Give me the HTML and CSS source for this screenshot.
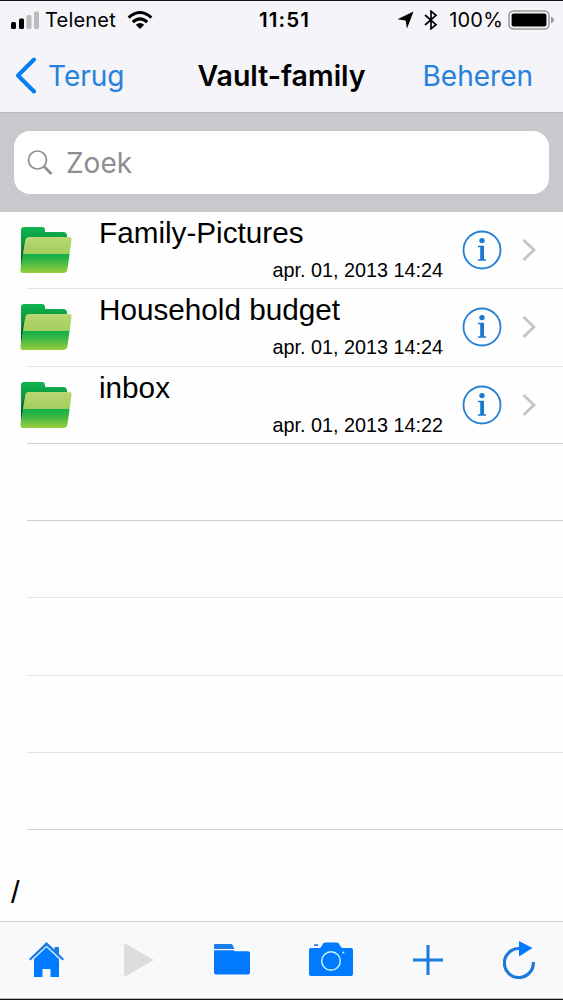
FILE: index.html
```html
<!DOCTYPE html>
<html lang="nl">
<head>
    <meta charset="UTF-8">
    <meta name="viewport" content="width=device-width, initial-scale=1.0">
    <title>Vault-family</title>
    <link rel="stylesheet" href="styles.css">
</head>
<body>
    <!-- shared shapes -->
    <svg width="0" height="0">
        <defs>
            <linearGradient id="back" x1="0" y1="0" x2="0" y2="1">
                <stop offset="0" stop-color="#12b552"/>
                <stop offset=".35" stop-color="#079a3f"/>
                <stop offset="1" stop-color="#09602a"/>
            </linearGradient>
            <linearGradient id="front" x1="0" y1="0" x2="0" y2="1">
                <stop offset="0" stop-color="#b9d774"/>
                <stop offset=".46" stop-color="#a3ce5c"/>
                <stop offset=".48" stop-color="#10b04a"/>
                <stop offset=".65" stop-color="#35b545"/>
                <stop offset="1" stop-color="#98cf3b"/>
            </linearGradient>
            <symbol id="folder" viewBox="0 0 52 48">
                <path fill="url(#back)" d="M1 4Q1 1 4 1H22Q25 1 25 4V6H43Q47 6 47 10V40H1Z"/>
                <path fill="#075c26" d="M5 14L1 30V42L6 20Z"/>
                <path fill="url(#front)" d="M9 11H49Q52 11 51.500 14L47.500 43Q47 47 43 47H3Q0 47 .5 43L5 15Q5.600 11 9 11Z"/>
            </symbol>
            <symbol id="info" viewBox="0 0 40 40">
                <circle cx="20" cy="20" r="18.500" fill="none" stroke="#2480d4" stroke-width="1.800"/>
                <circle cx="20" cy="10.600" r="2.700" fill="#1a78cf"/>
                <path fill="#1a78cf" d="M16 15.700H22V29.200H24V30.700H16V29.200H18.200V17.200H16Z"/>
            </symbol>
            <symbol id="chevron" viewBox="0 0 14 24">
                <path fill="none" stroke="#c4c4c6" stroke-width="2.800" d="M1.500 2L12 12L1.500 22"/>
            </symbol>
        </defs>
    </svg>

    <div class="phone">
        <header class="top">
            <div class="status">
                <div class="status-left">
                    <svg width="30" height="20" viewBox="0 0 30 20">
                        <rect x="1" y="12" width="5" height="7" rx="1.500"/>
                        <rect x="9" y="8.500" width="5" height="10.500" rx="1.500"/>
                        <rect x="16.500" y="5" width="5" height="14" rx="1.500" fill="#bcbcbe"/>
                        <rect x="24" y="1.500" width="5" height="17.500" rx="1.500" fill="#bcbcbe"/>
                    </svg>
                    <span class="carrier">Telenet</span>
                    <svg class="wifi" width="26" height="18" viewBox="0 0 26 18">
                        <g fill="none" stroke="#000" stroke-width="3">
                            <path d="M1.600 6.600Q13 -3.500 24.400 6.600"/>
                            <path d="M5.800 11.200Q13 4.600 20.200 11.200"/>
                        </g>
                        <path d="M8.800 13.700Q13 10.200 17.200 13.700L13 18Z"/>
                    </svg>
                </div>
                <span class="clock">11:51</span>
                <div class="status-right">
                    <svg width="17" height="18" viewBox="0 0 17 18">
                        <path d="M16.500 .5L10 17.500L8.600 9.600L.5 8.300Z"/>
                    </svg>
                    <svg class="bluetooth" width="14" height="20" viewBox="0 0 14 20">
                        <path fill="none" stroke="#000" stroke-width="1.700" d="M1 5L12 14.700L7 18.800V1.200L12 5.300L1 15"/>
                    </svg>
                    <span class="percent">100%</span>
                    <svg width="46" height="20" viewBox="0 0 46 20">
                        <rect x="1" y="1" width="40" height="18" rx="4.500" fill="none" stroke="#98989b" stroke-width="1.500"/>
                        <rect x="3.600" y="3.500" width="34.800" height="13" rx="2"/>
                        <path fill="#98989b" d="M43 6.500Q46 8 46 10T43 13.500Z"/>
                    </svg>
                </div>
            </div>
            <nav class="nav">
                <a class="back">
                    <svg width="22" height="37" viewBox="0 0 22 37">
                        <path fill="none" stroke="#067ef0" stroke-width="4" stroke-linecap="round" stroke-linejoin="round" d="M19 2.500L3 18.500L19 34.500"/>
                    </svg>
                    <span>Terug</span>
                </a>
                <h1>Vault-family</h1>
                <a class="manage">Beheren</a>
            </nav>
        </header>

        <div class="search">
            <div class="search-box">
                <svg width="26" height="26" viewBox="0 0 26 26">
                    <g fill="none" stroke="#8e8e90">
                        <circle cx="10.500" cy="10" r="9" stroke-width="1.700"/>
                        <path stroke-width="2.600" d="M17 16.500L24.500 24"/>
                    </g>
                </svg>
                <span>Zoek</span>
            </div>
        </div>

        <main class="list">
            <div class="row">
                <svg class="folder"><use href="#folder"/></svg>
                <div class="text">
                    <span class="name">Family-Pictures</span>
                    <span class="date">apr. 01, 2013 14:24</span>
                </div>
                <svg class="info"><use href="#info"/></svg>
                <svg class="chevron"><use href="#chevron"/></svg>
            </div>
            <div class="row">
                <svg class="folder"><use href="#folder"/></svg>
                <div class="text">
                    <span class="name">Household budget</span>
                    <span class="date">apr. 01, 2013 14:24</span>
                </div>
                <svg class="info"><use href="#info"/></svg>
                <svg class="chevron"><use href="#chevron"/></svg>
            </div>
            <div class="row dark">
                <svg class="folder"><use href="#folder"/></svg>
                <div class="text">
                    <span class="name">inbox</span>
                    <span class="date">apr. 01, 2013 14:22</span>
                </div>
                <svg class="info"><use href="#info"/></svg>
                <svg class="chevron"><use href="#chevron"/></svg>
            </div>
            <div class="row dark"></div>
            <div class="row"></div>
            <div class="row"></div>
            <div class="row"></div>
            <div class="row dark"></div>
        </main>

        <div class="path">/</div>

        <footer class="toolbar">
            <svg width="35" height="36" viewBox="0 0 35 36">
                <path fill="#1a7eea" d="M17.500 0L25.500 7.500V5H30V12L35 17L33.500 18.500L17.500 3.800L1.500 18.500L0 17Z"/>
                <path fill="#007aff" d="M17.500 5.300L30 17V35H21.500V27H13.500V35H5V17Z"/>
            </svg>
            <svg width="30" height="34" viewBox="0 0 30 34">
                <path fill="#dddcdf" d="M0 0L30 17L0 34Z"/>
            </svg>
            <svg width="36" height="31" viewBox="0 0 36 31">
                <path fill="#1a7eea" d="M0 5V1Q0 0 1 0H17Q18 0 18.600 1L20.500 5Z"/>
                <path fill="#007aff" d="M0 6.200H19.500L21 7.200H34Q36 7.200 36 9V28.500Q36 30.500 34 30.500H2Q0 30.500 0 28.500Z"/>
            </svg>
            <svg width="44" height="35" viewBox="0 0 44 35">
                <rect x="5" y="2.300" width="4.300" height="1.800" rx=".8" fill="#1a7eea"/>
                <path fill="#007aff" d="M2 6H10Q12 6 13 3.500Q14 .5 16 .5H28Q30 .5 31 3.500Q32 6 34 6H42Q44 6 44 8V32Q44 34 42 34H2Q0 34 0 32V8Q0 6 2 6Z"/>
                <circle cx="22" cy="19" r="9.300" fill="none" stroke="#c8f4ff" stroke-width="1.500"/>
                <circle cx="34.300" cy="10.500" r="1.100" fill="#c8f4ff"/>
            </svg>
            <svg width="30" height="30" viewBox="0 0 30 30">
                <path fill="none" stroke="#1a7bd9" stroke-width="3" d="M0 15H30M15 0V30"/>
            </svg>
            <svg width="32" height="38" viewBox="0 0 32 38">
                <path fill="none" stroke="#1a7bd9" stroke-width="3.200" d="M30.300 21A14.500 14.500 0 1 1 16 7.500"/>
                <path fill="#007aff" d="M16 0L29.500 7L16 15.500Z"/>
            </svg>
        </footer>
    </div>
</body>
</html>
```
FILE: styles.css
```css
* {
    box-sizing: border-box;
}
body {
    margin: 0;
    font-family: Inter, "Liberation Sans", sans-serif;
    color: #000;
    background: #fff;
}
svg {
    display: block;
    flex: none;
}
.phone {
    width: 563px;
    height: 1000px;
    display: flex;
    flex-direction: column;
    border-top: 1px solid #17101c;
    border-bottom: 1px solid #17171a;
    background: #fefefe;
}

/* status bar and navigation */
.top {
    height: 112px;
    background: #f5f4f9;
    border-bottom: 1px solid #b9b8bc;
}
.status {
    height: 37px;
    padding: 0 9px 0 10px;
    display: grid;
    grid-template-columns: 1fr auto 1fr;
    align-items: center;
    font-size: 20px;
}
.status-left,
.status-right {
    display: flex;
    align-items: center;
}
.status-right {
    justify-content: flex-end;
}
.carrier {
    margin-left: 5px;
    letter-spacing: 0.2px;
}
.wifi {
    margin-left: 11px;
}
.clock {
    margin-left: 5px;
    font-size: 20.5px;
    font-weight: 600;
    letter-spacing: 1.1px;
}
.bluetooth {
    margin-left: 10px;
}
.percent {
    margin: 0 5px 0 11px;
    letter-spacing: 0.2px;
}
.nav {
    height: 75px;
    padding: 0 30px;
    display: grid;
    grid-template-columns: 1fr auto 1fr;
    align-items: center;
    font-size: 28px;
    color: #2581dc;
}
.nav h1 {
    margin: 0;
    font-size: 28.5px;
    font-weight: 600;
    color: #000;
}
.back {
    margin-left: -15px;
    display: flex;
    align-items: center;
    gap: 11px;
}
.manage {
    text-align: right;
}

/* search */
.search {
    height: 99px;
    padding: 18px 14px;
    background: #c9c8cd;
}
.search-box {
    height: 63px;
    padding-left: 13px;
    display: flex;
    align-items: center;
    gap: 13px;
    border-radius: 16px;
    background: #fff;
    font-size: 28px;
    color: #8e8e92;
}

/* file list */
.list {
    font-family: "Liberation Sans", Arial, sans-serif;
}
.row {
    height: 77.25px;
    margin-left: 27px;
    display: flex;
    align-items: center;
    border-bottom: 1px solid #e4e4e7;
}
.row.dark {
    border-bottom-color: #cfcfd2;
}
.folder {
    width: 52px;
    height: 48px;
    margin-left: -7px;
}
.text {
    width: 344px;
    height: 100%;
    margin-left: 27px;
    padding-top: 4px;
    display: flex;
    flex-direction: column;
}
.name {
    font-size: 29.7px;
    line-height: 34px;
}
.date {
    align-self: flex-end;
    margin-top: 8px;
    font-size: 19.8px;
    line-height: 24px;
}
.info {
    width: 40px;
    height: 40px;
    margin-left: 19px;
}
.chevron {
    width: 14px;
    height: 24px;
    margin-left: 20px;
}

.path {
    flex: 1;
    padding: 46px 0 0 11px;
    font-size: 31px;
    line-height: 34px;
    font-family: "Liberation Sans", Arial, sans-serif;
}

/* bottom toolbar */
.toolbar {
    height: 78px;
    padding: 0 28px 1px 29px;
    display: flex;
    align-items: center;
    justify-content: space-between;
    border-top: 1px solid #d5d4d8;
    border-bottom: 1px solid #b5b5b8;
    background: #f9f8fb;
}
```
